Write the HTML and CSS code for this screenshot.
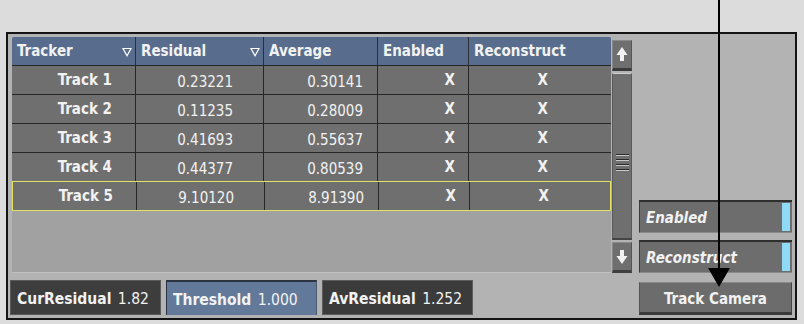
FILE: index.html
```html
<!DOCTYPE html>
<html>
<head>
<meta charset="utf-8">
<title>Tracker</title>
<link rel="stylesheet" href="styles.css">
</head>
<body>
<div class="panel">
  <div class="main">
    <div class="tablewrap">
      <div class="table">
        <div class="row head">
          <div class="cell"><span>Tracker</span><svg class="sort" width="10" height="10" viewBox="0 0 10 10"><path d="M1 1.5 H9 L5 8.8 Z" fill="none" stroke="#fff" stroke-width="1.2"/></svg></div>
          <div class="cell"><span>Residual</span><svg class="sort" width="10" height="10" viewBox="0 0 10 10"><path d="M1 1.5 H9 L5 8.8 Z" fill="none" stroke="#fff" stroke-width="1.2"/></svg></div>
          <div class="cell"><span>Average</span></div>
          <div class="cell"><span>Enabled</span></div>
          <div class="cell"><span>Reconstruct</span></div>
        </div>
        <div class="row">
          <div class="cell name">Track 1</div><div class="cell res">0.23221</div><div class="cell avg">0.30141</div><div class="cell en">X</div><div class="cell rec">X</div>
        </div>
        <div class="row">
          <div class="cell name">Track 2</div><div class="cell res">0.11235</div><div class="cell avg">0.28009</div><div class="cell en">X</div><div class="cell rec">X</div>
        </div>
        <div class="row">
          <div class="cell name">Track 3</div><div class="cell res">0.41693</div><div class="cell avg">0.55637</div><div class="cell en">X</div><div class="cell rec">X</div>
        </div>
        <div class="row">
          <div class="cell name">Track 4</div><div class="cell res">0.44377</div><div class="cell avg">0.80539</div><div class="cell en">X</div><div class="cell rec">X</div>
        </div>
        <div class="row sel">
          <div class="cell name">Track 5</div><div class="cell res">9.10120</div><div class="cell avg">8.91390</div><div class="cell en">X</div><div class="cell rec">X</div>
        </div>
      </div>
      <div class="scroll">
        <div class="sbtn up"><svg width="12" height="15" viewBox="0 0 12 15"><path d="M6 0 L11.5 8 H8 V14 H4 V8 H0.5 Z" fill="#f2f2f2"/></svg></div>
        <div class="strack"><div class="grip"><i></i><i></i><i></i><i></i></div></div>
        <div class="sbtn down"><svg width="12" height="15" viewBox="0 0 12 15"><path d="M6 15 L11.5 7 H8 V1 H4 V7 H0.5 Z" fill="#f2f2f2"/></svg></div>
      </div>
    </div>
    <div class="fields">
      <div class="field cur"><b>CurResidual</b> 1.82</div>
      <div class="field thr"><b>Threshold</b> 1.000</div>
      <div class="field av"><b>AvResidual</b> 1.252</div>
    </div>
  </div>
  <div class="side">
    <div class="toggle"><i>Enabled</i><span class="led"></span></div>
    <div class="toggle"><i>Reconstruct</i><span class="led"></span></div>
    <div class="btn">Track Camera</div>
  </div>
</div>
<div class="pointer"><div class="line"></div><div class="head"></div></div>
</body>
</html>
```

FILE: styles.css
```css
* { margin: 0; padding: 0; box-sizing: border-box; }
body { background: #dcdcdc; font-family: "DejaVu Sans Condensed", "DejaVu Sans", sans-serif; font-stretch: condensed; font-size: 15px; color: #f2f2f2; width: 804px; height: 324px; overflow: hidden; position: relative; }

.panel { margin: 32px 0 0 6px; width: 791px; height: 288px; border: 2px solid #141414; background: #b3b3b3; display: flex; gap: 7px; padding: 3px 3px 3px 2px; }

.main { width: 622px; display: flex; flex-direction: column; }
.tablewrap { height: 236px; margin-left: 2px; display: flex; gap: 1px; }
.table { width: 599px; background: #a1a1a1; border-bottom: 1px solid #c0c0c0; }

.row { display: grid; grid-template-columns: 123px 128px 114px 91px 143px; height: 29px; background: #6f6f6f; border-top: 1px solid #262626; }
.row:last-child { border-bottom: 1px solid #262626; height: 30px; }
.row.head { height: 28px; border-top: none; background: #586d8d; border-radius: 2px 2px 0 0; }
.cell { display: flex; align-items: center; justify-content: flex-end; border-left: 1px solid #262626; white-space: nowrap; }
.cell:first-child { border-left: none; }
.head .cell { justify-content: space-between; padding: 0 3px 0 5px; font-weight: bold; border-left-color: #2a2f38; }
.head .cell span { line-height: 1; }
.sort { display: block; margin-top: 1px; }

.name { font-weight: bold; padding-right: 23px; }
.res { padding-right: 30px; padding-top: 3px; }
.avg { padding-right: 14px; padding-top: 3px; }
.en { font-weight: bold; padding-right: 13px; }
.rec { font-weight: bold; padding-right: 63px; }
.row.sel { border: 1px solid #e4de6a; height: 30px; }
.row.sel .cell:first-child { margin-left: -1px; padding-left: 1px; }

.scroll { width: 20px; display: flex; flex-direction: column; padding-top: 3px; }
.sbtn { height: 31px; background: #6f6f6f; border-top: 1px solid #8a8a8a; border-left: 1px solid #888; border-right: 1px solid #555; border-bottom: 3px solid #3a3a3a; display: flex; align-items: center; justify-content: center; }
.sbtn.down { height: 31px; border-bottom: 3px solid #3e3e3e; }
.strack { flex: 1; margin: 2px 0 2px; background: #6f6f6f; border-top: 1px solid #d0d0d0; border-left: 1px solid #5a5a5a; border-right: 1px solid #5a5a5a; border-bottom: 2px solid #444; display: flex; align-items: center; justify-content: center; }
.grip { width: 13px; display: flex; flex-direction: column; gap: 3px; margin-top: 12px; }
.grip i { display: block; height: 2px; border-top: 1px solid #2a2a2a; border-bottom: 1px solid #c8c8c8; }

.fields { display: flex; gap: 5px; margin-top: 7px; height: 35px; }
.field { width: 151px; display: flex; align-items: center; padding: 3px 0 0 6px; white-space: pre; font-size: 15.5px; }
.field b { font-weight: bold; margin-right: 2px; }
.cur { background: #3d3d3d; border: 1px solid #5a5a5a; }
.thr { background: #62799a; border-top: 2px solid #2b3240; border-left: 1px solid #2b3240; border-right: 1px solid #4a5870; }
.av { background: #3b3b3b; border: 1px solid #5c5c5c; }

.side { width: 153px; display: flex; flex-direction: column; justify-content: flex-end; }
.toggle { height: 33px; background: #6d6d6d; border-top: 2px solid #2e2e2e; border-left: 1px solid #3a3a3a; border-bottom: 1px solid #8a8a8a; display: flex; align-items: center; justify-content: space-between; padding: 0 2px 0 6px; margin-bottom: 7px; }
.toggle i { font-weight: bold; font-style: italic; padding-top: 2px; }
.led { width: 8px; height: 28px; background: #8fdaf4; align-self: flex-end; margin-bottom: 1px; }
.toggle + .toggle { margin-bottom: 9px; }
.btn { height: 33px; background: #6c6c6c; border-top: 1px solid #8a8a8a; border-left: 1px solid #555; border-right: 1px solid #444; border-bottom: 3px solid #3a3a3a; display: flex; align-items: center; justify-content: center; font-weight: bold; padding-top: 2px; }

.pointer { position: absolute; left: 708px; top: 0; width: 23px; height: 288px; }
.pointer .line { margin-left: 10px; width: 2px; height: 270px; background: #000; }
.pointer .head { width: 0; height: 0; margin-top: -2px; border-left: 11.5px solid transparent; border-right: 11.5px solid transparent; border-top: 19px solid #000; }
```
